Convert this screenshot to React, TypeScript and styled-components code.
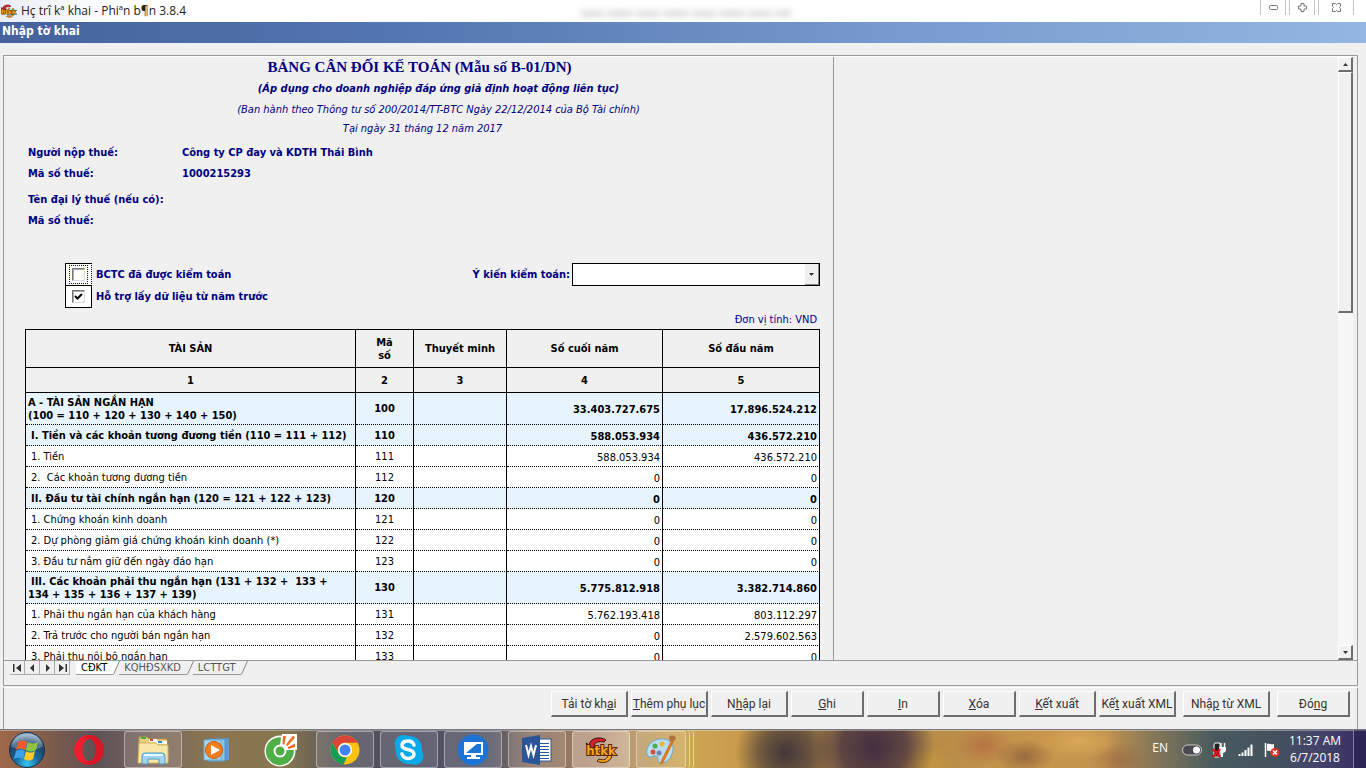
import React from 'react';
import styled, { createGlobalStyle, css } from 'styled-components';

const navy = '#000080';
const face = '#f0f0f0';
const line = '#999999';

const GlobalStyle = createGlobalStyle`
  *, *::before, *::after { box-sizing: border-box; }
  body {
    margin: 0;
    background: ${face};
    color: #000;
    font-family: "DejaVu Sans Condensed", "Liberation Sans", sans-serif;
    font-size: 11px;
    line-height: 13px;
  }
`;

const Window = styled.div`
  display: flex;
  flex-direction: column;
  height: 100vh;
  min-height: 480px;
  overflow: hidden;
`;

/* ---------- title bars ---------- */

const TitleBar = styled.header`
  display: flex;
  align-items: stretch;
  height: 22px;
  background: linear-gradient(90deg, #e9edf5 0, #ffffff 120px);
`;

const AppTitle = styled.h1`
  display: flex;
  align-items: center;
  gap: 4px;
  margin: 0;
  font: 400 12px/22px "Open Sans", "Noto Sans", sans-serif;
  color: #222;
`;

const GhostTitle = styled.div`
  flex: 1;
  display: flex;
  justify-content: center;
  align-items: center;
  padding: 4px 74px 0 0;

  &::before {
    content: '';
    width: 210px;
    height: 7px;
    background: repeating-linear-gradient(90deg, #dedede 0 22px, #f4f4f4 22px 28px);
    filter: blur(3px);
  }
`;

const WindowControls = styled.div`
  display: flex;
  gap: 3px;
  height: 15px;
  margin-right: 12px;
`;

const ControlButton = styled.button<{ $wide?: boolean }>`
  display: flex;
  align-items: center;
  justify-content: center;
  width: ${p => (p.$wide ? 36 : 26)}px;
  padding: 0;
  border: 0;
  border-left: 1px solid #c4c4c4;
  border-right: 1px solid #c4c4c4;
  background: transparent;
`;

const FormCaption = styled.h2`
  margin: 0;
  height: 21px;
  padding: 0 2px;
  background: linear-gradient(90deg, #45629e 0%, #5476b2 30%, #7899cd 65%, #94b6e1 100%);
  color: #fff;
  font-size: 12px;
  font-weight: 700;
  line-height: 18px;
`;

/* ---------- sheet area ---------- */

const Workspace = styled.main`
  flex: 1;
  min-height: 0;
  display: flex;
  flex-direction: column;
  padding: 12px 8px 0 3px;
  background: ${face};
`;

const SheetFrame = styled.section`
  flex: 1;
  min-height: 0;
  display: flex;
  flex-direction: column;
  border: 1px solid ${line};
`;

const Viewport = styled.div`
  flex: 1;
  min-height: 0;
  display: flex;
  border-top: 1px solid #fff;
  border-bottom: 1px solid ${line};
  padding-right: 4px;
`;

const Sheet = styled.div`
  width: 830px;
  overflow: hidden;
  padding: 0 13px 0 21px;
  border-right: 1px solid ${line};
  color: ${navy};
`;

const Blank = styled.div`
  flex: 1;
`;

const ScrollBar = styled.div`
  display: flex;
  flex-direction: column;
  width: 15px;
  background: #f7f7f7;
`;

const raised = css`
  border-style: solid;
  border-width: 1px 2px 2px 1px;
  border-color: #fff #6e6e6e #6e6e6e #fff;
  background: ${face};
`;

const ScrollArrow = styled.button`
  ${raised}
  display: flex;
  align-items: center;
  justify-content: center;
  height: 15px;
  padding: 0;
`;

const ScrollThumb = styled.div`
  ${raised}
  flex: 0 0 40%;
`;

const Spacer = styled.div`
  flex: 1;
`;

const DocHeading = styled.h3`
  margin: 0;
  padding-right: 6px;
  text-align: center;
  font: 700 15px/21px "Liberation Serif", serif;
`;

const DocNote = styled.p<{ $bold?: boolean; $shift?: boolean }>`
  margin: 0;
  padding-left: ${p => (p.$shift ? 0 : 32)}px;
  text-align: center;
  font-style: italic;
  font-weight: ${p => (p.$bold ? 700 : 400)};
  line-height: ${p => (p.$bold ? 22 : 19)}px;
`;

const TaxInfo = styled.dl`
  display: grid;
  grid-template-columns: 154px 1fr;
  row-gap: 8px;
  margin: 8px 0 0;
  padding-left: 3px;
  font-weight: 700;

  dt, dd { margin: 0; min-height: 13px; }
  dt:nth-of-type(3), dd:nth-of-type(3) { margin-top: 5px; }
`;

const Options = styled.div`
  display: flex;
  justify-content: space-between;
  margin-top: 36px;
  padding-left: 40px;
  font-weight: 700;
`;

const OptionLabel = styled.label`
  display: flex;
  align-items: center;
  gap: 4px;
  height: 22px;
`;

const OptionBox = styled.span<{ $focus?: boolean }>`
  display: flex;
  align-items: center;
  justify-content: center;
  width: 27px;
  height: 23px;
  border: 1px ${p => (p.$focus ? 'dotted' : 'solid')} #000;
  border-left-style: solid;
  border-top-style: solid;
  background: #fff;

  input { outline: ${p => (p.$focus ? '1px dotted #000080' : 'none')}; }
`;

const Tick = styled.input`
  appearance: none;
  width: 13px;
  height: 13px;
  margin: 0;
  outline-offset: 2px !important;
  border: 1px solid #777;
  border-right-color: #ddd;
  border-bottom-color: #ddd;
  box-shadow: inset 1px 1px 0 #aaa;
  background: #fff;

  &:checked {
    background: #fff url("data:image/svg+xml,%3Csvg xmlns='http://www.w3.org/2000/svg' viewBox='0 0 11 11'%3E%3Cpath d='M2 5l2.500 2.500L9 3' fill='none' stroke='%23000' stroke-width='2'/%3E%3C/svg%3E") center / 11px 11px no-repeat;
  }
`;

const Opinion = styled.label`
  display: flex;
  align-items: center;
  gap: 2px;
  height: 23px;
`;

const SelectBox = styled.span`
  display: flex;
  width: 248px;
  height: 23px;
  border: 1px solid #000;
  background: #fff;
`;

const OpinionSelect = styled.select`
  appearance: none;
  flex: 1;
  border: 0;
  outline: 0;
  background: #fff;
  font: inherit;
`;

const DropArrow = styled.span`
  display: flex;
  align-items: center;
  justify-content: center;
  width: 14px;
  border-right: 1px solid #888;
  border-bottom: 1px solid #888;
  background: ${face};
`;

const Unit = styled.p`
  margin: 6px 3px 3px 0;
  text-align: right;
`;

const Balance = styled.table`
  width: 100%;
  table-layout: fixed;
  border-collapse: separate;
  border-spacing: 0;
  border-top: 1px solid #000;
  border-left: 1px solid #000;
  color: #000;

  th, td { border-right: 1px solid #000; }
  th { height: 25px; padding: 0; border-bottom: 1px solid #000; font-weight: 700; }
  thead tr:first-child th { height: 38px; }
`;

const Row = styled.tr<{ $group?: boolean; $tall?: boolean }>`
  background: ${p => (p.$group ? '#e8f4fd' : '#fff')};

  td {
    height: ${p => (p.$tall ? 32 : 21)}px;
    padding: 0 2px;
    border-bottom: 1px dotted #000;
    font-weight: ${p => (p.$group ? 700 : 400)};
  }
`;

const NameCell = styled.td<{ $flush?: boolean }>`
  text-indent: ${p => (p.$flush ? 0 : 3)}px;
  white-space: pre;
`;

const CodeCell = styled.td`
  text-align: center;
`;

const AmountCell = styled.td`
  && { padding-top: 2px; }
  text-align: right;
`;

/* ---------- sheet tabs ---------- */

const TabRow = styled.nav`
  display: flex;
  height: 24px;
  padding-left: 6px;
`;

const NavButton = styled.button`
  display: flex;
  align-items: center;
  justify-content: center;
  width: 15px;
  height: 14px;
  padding: 0;
  border: 0;
  border-right: 1px solid #aaa;
  border-bottom: 1px solid #aaa;
  background: ${face};
`;

const Tabs = styled.div`
  display: flex;
  margin-left: 6px;
`;

const Tab = styled.button<{ $active?: boolean }>`
  position: relative;
  height: 14px;
  padding: 0 6px 0 5px;
  margin-right: 6px;
  border: 0;
  border-bottom: 1px solid ${line};
  background: ${p => (p.$active ? '#fff' : 'transparent')};
  color: ${p => (p.$active ? '#000' : '#555')};
  font: 11px/13px "DejaVu Sans Condensed", sans-serif;

  svg { position: absolute; left: 100%; top: 0; }
`;

/* ---------- command buttons ---------- */

const CommandBar = styled.footer`
  display: flex;
  justify-content: flex-end;
  gap: 3px;
  height: 42px;
  padding: 3px 7px 0 0;
  margin-top: 1px;
  border: 1px solid ${line};
  border-top-color: #fff;
  border-bottom: 0;
`;

const Command = styled.button<{ $size?: 'small' | 'large'; $apart?: boolean }>`
  ${raised}
  width: ${p => (p.$size === 'small' ? 73 : p.$size === 'large' ? 87 : 77)}px;
  height: 26px;
  margin-left: ${p => (p.$apart ? 4 : 0)}px;
  padding: 0;
  color: #333;
  font: 12px/20px Roboto, "Noto Sans", sans-serif;
  white-space: nowrap;
`;

/* ---------- taskbar ---------- */

const TaskBar = styled.nav`
  display: flex;
  align-items: stretch;
  height: 39px;
  border-top: 1px solid #77777f;
  box-shadow: inset 0 1px 0 rgba(255, 255, 255, 0.35);
  background:
    radial-gradient(ellipse 50px 50px at 57.500% 60%, rgba(60, 50, 56, 0.95), rgba(60, 50, 56, 0.6) 50%, transparent),
    radial-gradient(ellipse 60px 60px at 64% 45%, rgba(62, 42, 64, 0.95), rgba(62, 42, 64, 0.7) 55%, transparent),
    radial-gradient(ellipse 40px 22px at 67% 90%, rgba(206, 160, 56, 0.8), transparent),
    radial-gradient(ellipse 30px 20px at 72% 40%, rgba(176, 96, 64, 0.6), transparent),
    radial-gradient(ellipse 30px 18px at 75% 70%, rgba(120, 80, 56, 0.6), transparent),
    radial-gradient(ellipse 40px 18px at 79% 30%, rgba(226, 176, 90, 0.7), transparent),
    radial-gradient(ellipse 30px 18px at 82% 80%, rgba(140, 90, 60, 0.5), transparent),
    linear-gradient(90deg,
      #a0684a 0%, #7b5a4c 4%, #5c5356 7%, #7a6560 11%, #8b7650 16%, #85764f 21%,
      #55525c 25%, #4e4f62 31%, #575868 36%, #8d7360 39%, #9a7a62 43%, #b89a70 46%,
      #cfa858 50%, #c99b4a 54%, #a58048 60%, #b88d48 69%, #c8964c 76%, #c0924e 81%,
      #8c7a58 84%, #475a5e 89%, #45525f 93%, #43416a 97%, #352c60 100%);
`;

const TaskItem = styled.button<{ $open?: boolean; $lit?: boolean }>`
  display: flex;
  align-items: center;
  justify-content: center;
  width: 58px;
  height: 37px;
  margin: 1px 6px 0 0;
  padding: 0;
  border: 1px solid ${p => (p.$open ? 'rgba(255,255,255,0.4)' : 'transparent')};
  border-radius: 3px;
  background: ${p => (p.$lit ? 'rgba(255,235,225,0.35)' : p.$open ? 'rgba(255,255,255,0.12)' : 'transparent')};
`;

const StackEdge = styled.span`
  width: 4px;
  height: 37px;
  margin-top: 1px;
  border-right: 1px solid rgba(255, 255, 255, 0.5);
  border-radius: 0 3px 3px 0;
`;

const StartButton = styled(TaskItem)`
  width: 54px;
`;

const PaintItem = styled(TaskItem)`
  width: 50px;
  margin-right: 0;
`;

const Tray = styled.div`
  display: flex;
  align-items: center;
  margin-left: auto;
  color: #fff;
  font: 12px/17px "Open Sans", "Noto Sans", sans-serif;
`;

const Language = styled.span`
  padding-bottom: 4px;
  margin-right: 14px;
`;

const TrayIcons = styled.div`
  display: flex;
  align-items: center;
  gap: 10px;
  margin-top: 2px;
`;

const Clock = styled.time`
  width: 54px;
  margin: 0 11px 0 8px;
  text-align: center;
  white-space: nowrap;
`;

const ShowDesktop = styled.button`
  align-self: stretch;
  width: 13px;
  padding: 0;
  border: 0;
  border-left: 1px solid rgba(255, 255, 255, 0.4);
  background: rgba(30, 20, 70, 0.35);
`;

/* ---------- icons ---------- */

const HtkkWord = styled.text`
  font: 700 13px "DejaVu Sans Condensed", sans-serif;
  fill: #fba51f;
  stroke: #5a2605;
  stroke-width: 2px;
  paint-order: stroke;
`;

const HtkkLogo = ({ w, h }: { w: number; h: number }) => (
  <svg width={w} height={h} viewBox="0 0 34 28" aria-hidden="true">
    <path d="M5 9C6 2 16 0 22 4l-2 2c-5-1-9 0-10 3l3 1-8 3-3-6z" fill="#d8232a" stroke="#3a0c08" strokeWidth="1" />
    <path d="M28 17c1 8-8 12-15 8l2-2c5 2 8 0 9-4h-4l6-6 5 6z" fill="#f5a21a" stroke="#4a2606" strokeWidth="1" />
    <HtkkWord x="17" y="19" textAnchor="middle">htkk</HtkkWord>
  </svg>
);

const StartOrb = () => (
  <svg width="38" height="38" viewBox="0 0 38 38" aria-hidden="true">
    <defs>
      <radialGradient id="orb" cx="50%" cy="90%" r="85%">
        <stop offset="0" stopColor="#35c8f2" />
        <stop offset="0.400" stopColor="#17699c" />
        <stop offset="0.750" stopColor="#1d4468" />
        <stop offset="1" stopColor="#8fb0c8" />
      </radialGradient>
    </defs>
    <circle cx="19" cy="19" r="17.500" fill="url(#orb)" stroke="#16304a" />
    <path d="M4 16a15 13 0 0 1 30 0c-8 4-20 4-30 0z" fill="#fff" opacity="0.250" />
    <path d="M10 11c3-2 6-2 9 0l-2 8c-3-2-6-2-9 0z" fill="#f0592a" />
    <path d="M20 11c3 2 6 2 10 0l-2 8c-4 2-7 2-10 0z" fill="#8cc63f" />
    <path d="M8 20c3-2 6-2 9 0l-2 8c-3-2-6-1-9 0z" fill="#3fa2e8" />
    <path d="M18 20c3 2 6 2 9 0l-2 8c-3 2-6 2-9 0z" fill="#fdc926" />
  </svg>
);

const OperaIcon = () => (
  <svg width="32" height="32" viewBox="0 0 32 32" aria-hidden="true">
    <path fillRule="evenodd" d="M16 1a15 15 0 1 0 0 30 15 15 0 0 0 0-30zm0 4c4 0 6.500 5 6.500 11S20 27 16 27s-6.500-5-6.500-11S12 5 16 5z" fill="#f01e2e" />
    <path d="M19 1.300a15 15 0 0 1 0 29.400C13 31 10 28 9 26c2 2 5 3 7 1 4 0 6.500-5 6.500-11S20 5 16 5c-2-2-5-1-7 1 2-3 6-5 10-4.700z" fill="#b80f1c" opacity="0.450" />
  </svg>
);

const ExplorerIcon = () => (
  <svg width="34" height="32" viewBox="0 0 34 32" aria-hidden="true">
    <path d="M3 3h8l2 2h18v22H3z" fill="#e9cf7c" stroke="#b99843" />
    <path d="M5 3h5v2H5z" fill="#3fae49" />
    <path d="M13 5h8v3h-8z" fill="#fff" />
    <path d="M14 5h3v2h-3z" fill="#d8432e" />
    <path d="M20 7h11v3H20z" fill="#fff" />
    <path d="M22 7h4v2h-4z" fill="#2f83d6" />
    <path d="M3 9h17l2 2h10v18H2z" fill="#f8e7a6" stroke="#d2b562" />
    <path d="M6 30V22a3 3 0 0 1 3-3h17a3 3 0 0 1 3 3v8h-6v-5H12v5z" fill="#9fd3ef" stroke="#4a9ccc" />
    <path d="M8 21h19" stroke="#e8f8ff" strokeWidth="2" />
  </svg>
);

const MediaIcon = () => (
  <svg width="28" height="28" viewBox="0 0 28 28" aria-hidden="true">
    <path d="M8 3l18-1v22l-18 2z" fill="#5e9ec8" />
    <path d="M5 3h17v22H5z" fill="#8cc4e4" stroke="#5893bc" />
    <path d="M1 4h17v20H1z" fill="#a9d5ee" stroke="#6ea8cc" />
    <circle cx="11" cy="14" r="8.500" fill="#f07d1e" stroke="#c95f10" />
    <path d="M8 9l9 5-9 5z" fill="#fff" />
  </svg>
);

const CocCocIcon = () => (
  <svg width="34" height="34" viewBox="0 0 34 34" aria-hidden="true">
    <circle cx="16" cy="18" r="15.500" fill="#fff" />
    <path d="M16 14L18 1h15v16z" fill="#fff" />
    <path d="M17 4.200A14 14 0 1 0 29.800 17H20.500a4.800 4.800 0 1 1-4.500-4.500z" fill="#4fae48" />
    <circle cx="16" cy="18" r="6.500" fill="#fff" />
    <circle cx="16" cy="18" r="4.500" fill="#4fae48" />
    <path d="M19 3h3l-1.500 8.500h-2zM29 2.500l2 2-7.500 8.500-1.500-1.500zM31 10.500v3.500l-7 2v-2z" fill="#ef6a22" />
  </svg>
);

const ChromeIcon = () => (
  <svg width="32" height="32" viewBox="0 0 32 32" aria-hidden="true">
    <circle cx="16" cy="16" r="14.500" fill="#fbc116" />
    <path d="M3.400 8.800A14.500 14.500 0 0 1 28.600 8.800H16a7.200 7.200 0 0 0-6.300 10.800z" fill="#dc4437" />
    <path d="M3.400 8.800l6.300 10.800A7.200 7.200 0 0 0 18 23l-3.500 7.400A14.500 14.500 0 0 1 3.400 8.800z" fill="#149c58" />
    <circle cx="16" cy="16" r="7" fill="#fff" />
    <circle cx="16" cy="16" r="5.500" fill="#4284f3" />
  </svg>
);

const SkypeIcon = () => (
  <svg width="30" height="32" viewBox="0 0 30 32" aria-hidden="true">
    <path d="M9 1c3 0 5 1 6 1 8 0 14 6 13 15 1 2 2 4 1 7-1 6-7 8-12 6C8 31 1 25 2 15-1 9 2 1 9 1z" fill="#0aaaea" />
    <path d="M20 11c-1-3-4-4-6-4-4 0-6 2-6 4.500C8 17 20 14 20 20c0 3-3 4.500-6 4.500S9 23 8 20" fill="none" stroke="#fff" strokeWidth="3.500" strokeLinecap="round" />
  </svg>
);

const RemoteIcon = () => (
  <svg width="32" height="32" viewBox="0 0 32 32" aria-hidden="true">
    <circle cx="16" cy="16" r="15.500" fill="#1c74d4" />
    <rect x="8" y="9" width="17" height="11" fill="#1c74d4" stroke="#fff" strokeWidth="2" />
    <path d="M9 19L21 9H9z" fill="#fff" />
    <path d="M14 21h5v2h4v2H10v-2h4z" fill="#fff" />
  </svg>
);

const WordIcon = () => (
  <svg width="30" height="32" viewBox="0 0 30 32" aria-hidden="true">
    <rect x="16" y="5" width="13" height="22" fill="#fff" stroke="#2a5699" />
    <path d="M18 9.500h9M18 12.500h9M18 15.500h9M18 18.500h9M18 21.500h9M18 24.500h9" stroke="#2a5699" />
    <path d="M0 4l18-3v30L0 28z" fill="#2a5699" />
    <path d="M4 11l2.500 10L9 12l2.500 9L14 11" fill="none" stroke="#fff" strokeWidth="2" />
  </svg>
);

const PaintIcon = () => (
  <svg width="34" height="32" viewBox="0 0 34 32" aria-hidden="true">
    <path d="M16 5c8-1 14 4 13 11-1 9-8 14-13 13-4-1 0-6-4-7-3-1-5 3-8 0C0 17 5 6 16 5z" fill="#b8dcf0" stroke="#6fa5c8" />
    <circle cx="9" cy="18" r="2.500" fill="#d8503a" />
    <circle cx="11" cy="12" r="2.500" fill="#4cae4c" />
    <circle cx="18" cy="10" r="2.500" fill="#f0b428" />
    <circle cx="15" cy="19" r="2.500" fill="#6d84b0" />
    <path d="M29 6L17 30" stroke="#d87a20" strokeWidth="3" />
    <path d="M25 3c3-3 6-1 7 1-1 3-4 4-6 3z" fill="#b5713a" />
  </svg>
);

const Triangle = ({ dir }: { dir: 'up' | 'down' }) => (
  <svg width="5" height="3" viewBox="0 0 5 3" aria-hidden="true">
    <path d={dir === 'up' ? 'M0 3h5L2.500 0z' : 'M0 0h5L2.500 3z'} fill="#333" />
  </svg>
);

const NavGlyph = ({ d }: { d: string }) => (
  <svg width="9" height="8" viewBox="0 0 9 8" aria-hidden="true">
    <path d={d} fill="#333" />
  </svg>
);

const TabEdge = ({ on }: { on?: boolean }) => (
  <svg width="7" height="14" viewBox="0 0 7 14" aria-hidden="true">
    <path d="M0 14V0h6.500L0.500 14z" fill={on ? '#fff' : face} />
    <path d="M6.500 0L0.500 13.500" stroke="#888" fill="none" />
  </svg>
);

/* ---------- data ---------- */

type Entry = {
  name: string;
  code: string;
  end: string;
  start: string;
  group?: boolean;
  tall?: boolean;
  flush?: boolean;
};

const entries: Entry[] = [
  { name: 'A - TÀI SẢN NGẮN HẠN\n(100 = 110 + 120 + 130 + 140 + 150)', code: '100', end: '33.403.727.675', start: '17.896.524.212', group: true, tall: true, flush: true },
  { name: 'I. Tiền và các khoản tương đương tiền (110 = 111 + 112)', code: '110', end: '588.053.934', start: '436.572.210', group: true },
  { name: '1. Tiền', code: '111', end: '588.053.934', start: '436.572.210' },
  { name: '2.  Các khoản tương đương tiền', code: '112', end: '0', start: '0' },
  { name: 'II. Đầu tư tài chính ngắn hạn (120 = 121 + 122 + 123)', code: '120', end: '0', start: '0', group: true },
  { name: '1. Chứng khoán kinh doanh', code: '121', end: '0', start: '0' },
  { name: '2. Dự phòng giảm giá chứng khoán kinh doanh (*)', code: '122', end: '0', start: '0' },
  { name: '3. Đầu tư nắm giữ đến ngày đáo hạn', code: '123', end: '0', start: '0' },
  { name: 'III. Các khoản phải thu ngắn hạn (131 + 132 +  133 +\n134 + 135 + 136 + 137 + 139)', code: '130', end: '5.775.812.918', start: '3.382.714.860', group: true, tall: true },
  { name: '1. Phải thu ngắn hạn của khách hàng', code: '131', end: '5.762.193.418', start: '803.112.297' },
  { name: '2. Trả trước cho người bán ngắn hạn', code: '132', end: '0', start: '2.579.602.563' },
  { name: '3. Phải thu nội bộ ngắn hạn', code: '133', end: '0', start: '0' },
];

export default function App() {
  return (
    <Window>
      <GlobalStyle />
      <TitleBar>
        <AppTitle>
          <HtkkLogo w={17} h={14} />
          Hç trî kª khai - Phiªn b¶n 3.8.4
        </AppTitle>
        <GhostTitle />
        <WindowControls>
          <ControlButton aria-label="Minimize">
            <svg width="9" height="5" viewBox="0 0 9 5"><rect x="0.500" y="0.500" width="8" height="4" rx="1" fill="#fff" stroke="#777" /></svg>
          </ControlButton>
          <ControlButton aria-label="Restore">
            <svg width="9" height="9" viewBox="0 0 9 9"><path d="M3 .500h3V3h2.500v3H6v2.500H3V6H.500V3H3z" fill="#fff" stroke="#777" /></svg>
          </ControlButton>
          <ControlButton aria-label="Close" $wide>
            <svg width="9" height="9" viewBox="0 0 9 9"><path d="M.500.500h3l1 1 1-1h3v3l-1 1 1 1v3h-3l-1-1-1 1h-3v-3l1-1-1-1z" fill="#fff" stroke="#777" /></svg>
          </ControlButton>
        </WindowControls>
      </TitleBar>
      <FormCaption>Nhập tờ khai</FormCaption>

      <Workspace>
        <SheetFrame>
          <Viewport>
            <Sheet>
              <DocHeading>BẢNG CÂN ĐỐI KẾ TOÁN (Mẫu số B-01/DN)</DocHeading>
              <DocNote $bold>(Áp dụng cho doanh nghiệp đáp ứng giả định hoạt động liên tục)</DocNote>
              <DocNote>(Ban hành theo Thông tư số 200/2014/TT-BTC Ngày 22/12/2014 của Bộ Tài chính)</DocNote>
              <DocNote $shift>Tại ngày 31 tháng 12 năm 2017</DocNote>
              <TaxInfo>
                <dt>Người nộp thuế:</dt>
                <dd>Công ty CP đay và KDTH Thái Bình</dd>
                <dt>Mã số thuế:</dt>
                <dd>1000215293</dd>
                <dt>Tên đại lý thuế (nếu có):</dt>
                <dd />
                <dt>Mã số thuế:</dt>
                <dd />
              </TaxInfo>
              <Options>
                <div>
                  <OptionLabel>
                    <OptionBox $focus><Tick type="checkbox" /></OptionBox>
                    BCTC đã được kiểm toán
                  </OptionLabel>
                  <OptionLabel>
                    <OptionBox><Tick type="checkbox" defaultChecked /></OptionBox>
                    Hỗ trợ lấy dữ liệu từ năm trước
                  </OptionLabel>
                </div>
                <Opinion>
                  Ý kiến kiểm toán:
                  <SelectBox>
                    <OpinionSelect defaultValue=""><option value="" /></OpinionSelect>
                    <DropArrow><Triangle dir="down" /></DropArrow>
                  </SelectBox>
                </Opinion>
              </Options>
              <Unit>Đơn vị tính: VND</Unit>
              <Balance>
                <colgroup>
                  <col style={{ width: 330 }} />
                  <col style={{ width: 58 }} />
                  <col style={{ width: 93 }} />
                  <col style={{ width: 156 }} />
                  <col />
                </colgroup>
                <thead>
                  <tr>
                    <th>TÀI SẢN</th>
                    <th>Mã<br />số</th>
                    <th>Thuyết minh</th>
                    <th>Số cuối năm</th>
                    <th>Số đầu năm</th>
                  </tr>
                  <tr>
                    <th>1</th>
                    <th>2</th>
                    <th>3</th>
                    <th>4</th>
                    <th>5</th>
                  </tr>
                </thead>
                <tbody>
                  {entries.map(e => (
                    <Row key={e.code} $group={e.group} $tall={e.tall}>
                      <NameCell $flush={e.flush}>{e.name}</NameCell>
                      <CodeCell>{e.code}</CodeCell>
                      <td />
                      <AmountCell>{e.end}</AmountCell>
                      <AmountCell>{e.start}</AmountCell>
                    </Row>
                  ))}
                </tbody>
              </Balance>
            </Sheet>
            <Blank />
            <ScrollBar>
              <ScrollArrow aria-label="Scroll up"><Triangle dir="up" /></ScrollArrow>
              <ScrollThumb />
              <Spacer />
              <ScrollArrow aria-label="Scroll down"><Triangle dir="down" /></ScrollArrow>
            </ScrollBar>
          </Viewport>
          <TabRow>
            <NavButton aria-label="First sheet"><NavGlyph d="M0 0h1.500v8H0zM8 0v8L3 4z" /></NavButton>
            <NavButton aria-label="Previous sheet"><NavGlyph d="M6 0v8L2 4z" /></NavButton>
            <NavButton aria-label="Next sheet"><NavGlyph d="M3 0v8l4-4z" /></NavButton>
            <NavButton aria-label="Last sheet"><NavGlyph d="M7.500 0H9v8H7.500zM1 0v8l5-4z" /></NavButton>
            <Tabs>
              <Tab $active>CĐKT<TabEdge on /></Tab>
              <Tab>KQHĐSXKD<TabEdge /></Tab>
              <Tab>LCTTGT<TabEdge /></Tab>
            </Tabs>
          </TabRow>
        </SheetFrame>
        <CommandBar>
          <Command>Tải tờ kh<u>a</u>i</Command>
          <Command><u>T</u>hêm phụ lục</Command>
          <Command>N<u>h</u>ập lại</Command>
          <Command $size="small"><u>G</u>hi</Command>
          <Command $size="small"><u>I</u>n</Command>
          <Command $size="small"><u>X</u>óa</Command>
          <Command><u>K</u>ết xuất</Command>
          <Command>Kế<u>t</u> xuất XML</Command>
          <Command $size="large" $apart>Nhậ<u>p</u> từ XML</Command>
          <Command $size="small" $apart>Đó<u>n</u>g</Command>
        </CommandBar>
      </Workspace>

      <TaskBar>
        <StartButton aria-label="Start"><StartOrb /></StartButton>
        <TaskItem aria-label="Opera"><OperaIcon /></TaskItem>
        <TaskItem $open aria-label="Explorer"><ExplorerIcon /></TaskItem>
        <TaskItem aria-label="Media Player"><MediaIcon /></TaskItem>
        <TaskItem aria-label="Cốc Cốc"><CocCocIcon /></TaskItem>
        <TaskItem $open aria-label="Chrome"><ChromeIcon /></TaskItem>
        <TaskItem $open aria-label="Skype"><SkypeIcon /></TaskItem>
        <TaskItem $open aria-label="Remote desktop"><RemoteIcon /></TaskItem>
        <TaskItem $open aria-label="Word"><WordIcon /></TaskItem>
        <TaskItem $open $lit aria-label="HTKK"><HtkkLogo w={34} h={28} /></TaskItem>
        <PaintItem $open aria-label="Paint"><PaintIcon /></PaintItem>
        <StackEdge />
        <StackEdge />
        <Tray>
          <Language>EN</Language>
          <TrayIcons>
            <svg width="20" height="12" viewBox="0 0 20 12" aria-hidden="true">
              <rect x="0.500" y="1" width="19" height="10" rx="5" fill="#4a4a50" stroke="#ccc" />
              <circle cx="14.500" cy="6" r="3.500" fill="#fff" />
            </svg>
            <svg width="16" height="16" viewBox="0 0 16 16" aria-hidden="true">
              <path d="M3 1h5v14H2V3z" fill="#222" stroke="#fff" />
              <path d="M7 5h7v3c0 2-2 3-3 3v4H9V11C8 10 7 9 7 8z" fill="#fff" />
              <path d="M9 1v4M12.500 1v4" stroke="#fff" strokeWidth="1.500" />
              <path d="M1 7l7 8M8 7l-7 8" stroke="#e01010" strokeWidth="2.500" />
            </svg>
            <svg width="16" height="14" viewBox="0 0 16 14" aria-hidden="true">
              <path d="M1.500 13v-2M4.500 13V9.500M7.500 13V7M10.500 13V4.500M13.500 13V1.500" stroke="#fff" strokeWidth="2" />
            </svg>
            <svg width="16" height="16" viewBox="0 0 16 16" aria-hidden="true">
              <path d="M1.500 1v14" stroke="#fff" strokeWidth="1.500" />
              <path d="M3 2c3-1 4 1 7 0v7c-3 1-4-1-7 0z" fill="#fff" />
              <circle cx="11" cy="10.500" r="4.500" fill="#dd3524" />
              <path d="M9 8.500l4 4M13 8.500l-4 4" stroke="#fff" strokeWidth="1.500" />
            </svg>
          </TrayIcons>
          <Clock>11:37 AM<br />6/7/2018</Clock>
          <ShowDesktop aria-label="Show desktop" />
        </Tray>
      </TaskBar>
    </Window>
  );
}
